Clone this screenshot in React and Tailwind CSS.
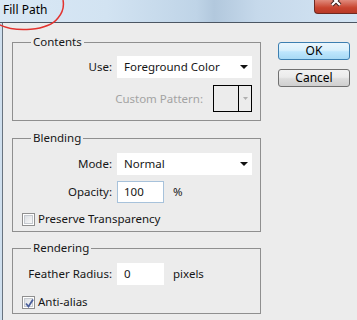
import React from "react";

const Dropdown = ({ value }) => (
  <div className="w-[135px] h-[22px] bg-white flex items-center justify-between pl-[7px] pr-[4px]">
    <span>{value}</span>
    <svg width="8" height="4" viewBox="0 0 8 4">
      <path d="M0 0 H8 L4 4 Z" fill="#111" />
    </svg>
  </div>
);

const Checkbox = ({ checked }) => (
  <div className="w-[13px] h-[13px] border border-[#8f8f8f] bg-white p-px">
    <div className="w-full h-full border border-[#c5c9cf] bg-[linear-gradient(135deg,#dcdfe3,#f8f8f8)] relative">
      {checked && (
        <svg className="absolute -left-px -top-px" width="11" height="11" viewBox="0 0 11 11">
          <path d="M2 5.5 L4.5 8.5 L9 1.5" fill="none" stroke="#4a5f9c" strokeWidth="1.8" />
        </svg>
      )}
    </div>
  </div>
);

const Group = ({ title, className, children }) => (
  <div className={`relative border border-[#8f8f8f] ${className}`}>
    {/* legend over the top border */}
    <span className="absolute left-[18px] -top-[9px] px-[2px] bg-[#ececec] leading-[16px]">
      {title}
    </span>
    {children}
  </div>
);

const Row = ({ label, labelClass = "", children, className = "" }) => (
  <div className={`flex items-center ${className}`}>
    <div className={`w-[99px] text-right ${labelClass}`}>{label}</div>
    <div className="ml-[5px] flex items-center">{children}</div>
  </div>
);

export default function App() {
  return (
    <div className="w-[357px] h-[320px] overflow-hidden bg-[#ececec] text-[11.5px] text-[#161616] font-['Noto_Sans',sans-serif] leading-[16px]">
      {/* Title bar */}
      <div className="relative h-[22px] bg-[linear-gradient(90deg,#d9e8f5_0%,#d2e3f2_30%,#bfd4e7_55%,#b2c8dd_60%,#c6d9eb_72%,#d3e4f3_100%)]">
        <div className="pl-[3px] pt-[2px] text-black text-[12px]">Fill Path</div>
        <svg className="absolute left-0 top-0" width="80" height="40" viewBox="0 0 80 40">
          <path
            d="M-2 24 C 15 33, 48 31, 58 18 C 63 12, 64 5, 63 0"
            fill="none"
            stroke="#e2332f"
            strokeWidth="1.5"
          />
        </svg>
        <div className="absolute right-0 top-0 w-[43px] h-[14px] rounded-bl-[4px] border border-t-0 border-r-0 border-[#6e2a22] bg-[linear-gradient(180deg,#e08a7c,#c8442f_60%,#b83a28)] flex justify-center">
          <svg width="14" height="8" viewBox="0 0 14 8">
            <path d="M3 -3 L11 5 M11 -3 L3 5" stroke="#3a1a16" strokeWidth="4" />
            <path d="M3 -3 L11 5 M11 -3 L3 5" stroke="#fff" strokeWidth="2.2" />
          </svg>
        </div>
      </div>
      <div className="h-px bg-[#4b5663]" />

      {/* Body */}
      <div className="flex h-[297px]">
        <div className="w-[2px] bg-[#cfdfee]" />
        <div className="w-px bg-[#68737f]" />

        <div className="ml-[9px] w-[249px]">
          <Group title="Contents" className="mt-[19px] h-[79px] pt-[13px]">
            <Row label="Use:">
              <Dropdown value="Foreground Color" />
            </Row>
            <div className="flex items-center justify-end mt-[7px] pr-[8px]">
              <span className="text-[#a3a3a3] mr-[10px]">Custom Pattern:</span>
              <div className="w-[39px] h-[27px] border border-black flex">
                <div className="w-[25px] border-r border-black" />
                <div className="flex-1 flex items-center justify-center">
                  <svg width="5" height="3" viewBox="0 0 5 3">
                    <path d="M0 0 H5 L2.5 3 Z" fill="#b0b0b0" />
                  </svg>
                </div>
              </div>
            </div>
          </Group>

          <Group title="Blending" className="mt-[17px] h-[94px] pt-[14px]">
            <Row label="Mode:">
              <Dropdown value="Normal" />
            </Row>
            <Row label="Opacity:" className="mt-[6px]">
              <div className="w-[47px] h-[22px] bg-white border border-[#a7c2db] pl-[6px] flex items-center">
                100
              </div>
              <span className="ml-[9px]">%</span>
            </Row>
            <div className="flex items-center mt-[8px] pl-[9px]">
              <Checkbox />
              <span className="ml-[3px]">Preserve Transparency</span>
            </div>
          </Group>

          <Group title="Rendering" className="mt-[16px] h-[66px] pt-[14px]">
            <Row label="Feather Radius:">
              <div className="w-[47px] h-[22px] bg-white pl-[7px] flex items-center">0</div>
              <span className="ml-[9px]">pixels</span>
            </Row>
            <div className="flex items-center mt-[9px] pl-[9px]">
              <Checkbox checked />
              <span className="ml-[3px]">Anti-alias</span>
            </div>
          </Group>
        </div>

        {/* Buttons */}
        <div className="ml-[17px] mt-[19px] flex flex-col gap-[9px]">
          <button className="w-[72px] h-[18px] rounded-[3px] border border-[#3c7fb1] bg-[linear-gradient(180deg,#eaf6fd_0%,#d9f0fc_45%,#bee6fd_55%,#a7d9f5_100%)] text-black text-[12px] leading-[14px]">
            OK
          </button>
          <button className="w-[72px] h-[18px] rounded-[3px] border border-[#707070] bg-[linear-gradient(180deg,#f2f2f2_0%,#ebebeb_45%,#dddddd_55%,#cfcfcf_100%)] text-black text-[12px] leading-[14px]">
            Cancel
          </button>
        </div>
      </div>
    </div>
  );
}
